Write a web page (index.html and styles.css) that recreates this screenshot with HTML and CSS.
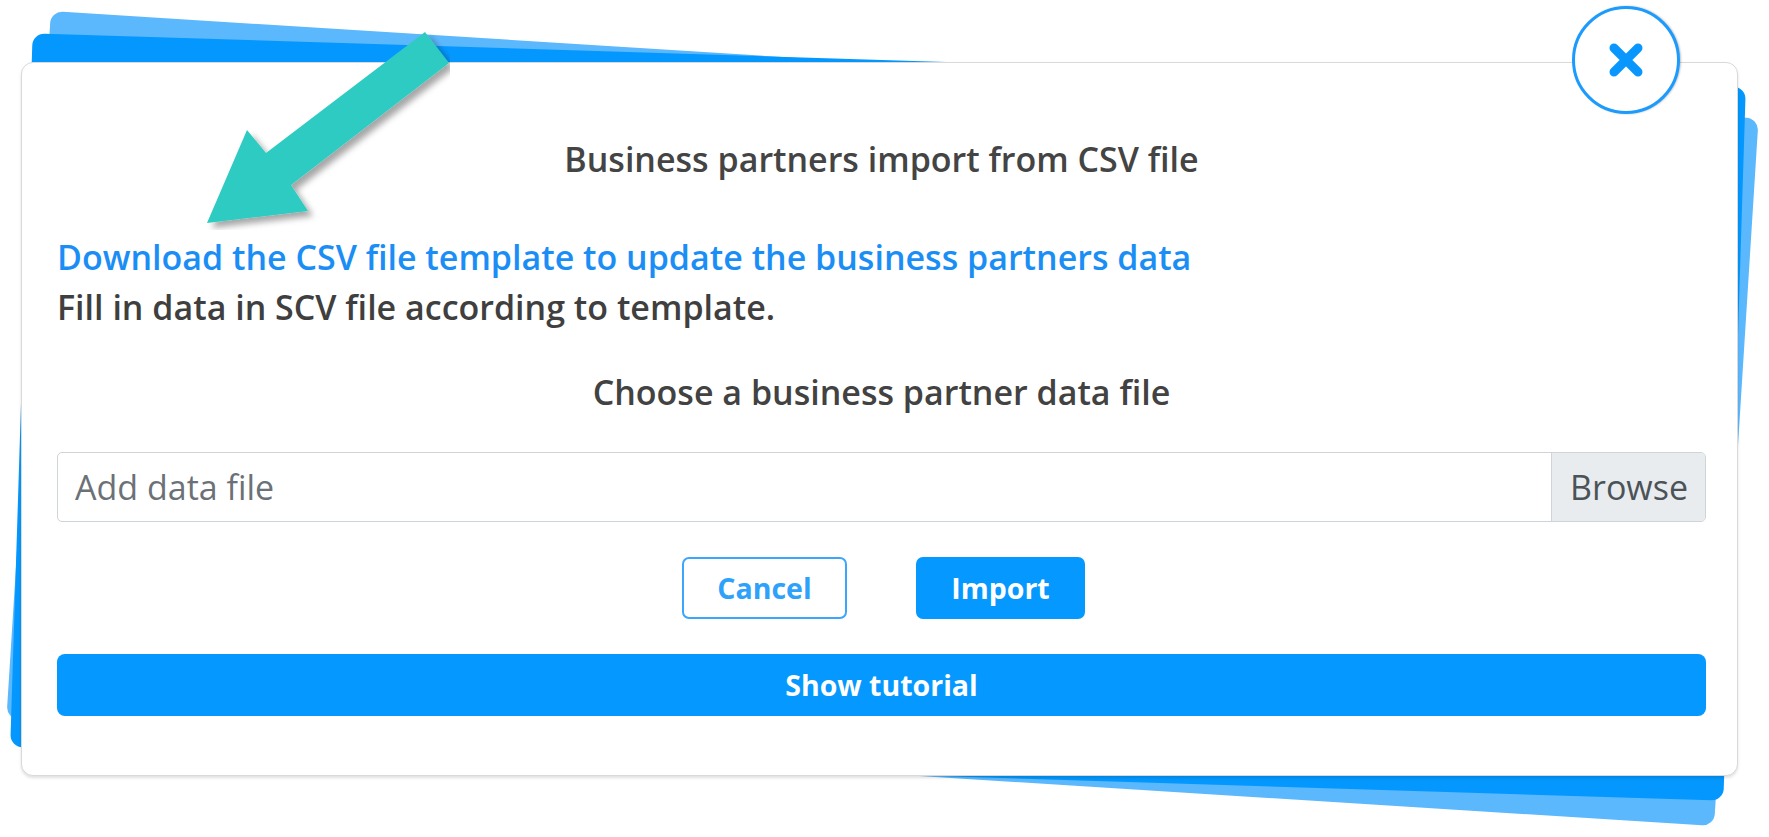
FILE: index.html
```html
<!DOCTYPE html>
<html lang="en">
<head>
<meta charset="utf-8">
<title>Business partners import</title>
<link rel="stylesheet" href="styles.css">
</head>
<body>
<div class="stage">
  <div class="layer layer-light"></div>
  <div class="layer layer-dark"></div>
  <div class="card">
    <h1 class="title">Business partners import from CSV file</h1>
    <a class="link" href="#">Download the CSV file template to update the business partners data</a>
    <p class="hint">Fill in data in SCV file according to template.</p>
    <h2 class="choose">Choose a business partner data file</h2>
    <div class="file">
      <span class="file-text">Add data file</span>
      <span class="file-btn">Browse</span>
    </div>
    <div class="actions">
      <button class="btn btn-outline">Cancel</button>
      <button class="btn btn-solid">Import</button>
    </div>
    <button class="btn btn-wide">Show tutorial</button>
    <button class="close" aria-label="Close">
      <svg width="36" height="36" viewBox="0 0 36 36"><path d="M6 6 L30 30 M30 6 L6 30" stroke="#0a97fd" stroke-width="9" stroke-linecap="round" fill="none"/></svg>
    </button>
  </div>
  <svg class="arrow" width="260" height="210" viewBox="190 20 260 210">
    <defs>
      <filter id="sh" x="-20%" y="-20%" width="140%" height="140%">
        <feDropShadow dx="5" dy="5" stdDeviation="3" flood-color="#000" flood-opacity="0.35"/>
      </filter>
    </defs>
    <polygon points="425,32 449,63 291,185 308,211 207,223 247,130 266,153" fill="#2ecbc3" filter="url(#sh)"/>
  </svg>
</div>
</body>
</html>
```
FILE: styles.css
```css
html, body {
  margin: 0;
  padding: 0;
  background: #ffffff;
}
.stage {
  position: relative;
  width: 1769px;
  height: 837px;
  overflow: hidden;
  padding-top: 62px;
  box-sizing: border-box;
  font-family: "Open Sans", "Liberation Sans", sans-serif;
}
.layer {
  position: absolute;
  border-radius: 12px;
}
.layer-light {
  left: 27px;
  top: 64px;
  width: 1711px;
  height: 709px;
  background: #5cb8fd;
  transform: rotate(3.6deg);
}
.layer-dark {
  left: 21px;
  top: 60px;
  width: 1714px;
  height: 714px;
  background: #0497fe;
  transform: rotate(1.8deg);
}
.card {
  position: relative;
  margin-left: 21px;
  width: 1717px;
  height: 714px;
  box-sizing: border-box;
  padding: 76px 31px 0 35px;
  background: #ffffff;
  border: 1px solid #d9d9d9;
  border-radius: 12px;
  box-shadow: 0 2px 3px rgba(0,0,0,0.12);
  display: flex;
  flex-direction: column;
}
.title {
  margin: 0;
  font-size: 34px;
  font-weight: 600;
  line-height: 40px;
  color: #444444;
  text-align: center;
}
.link {
  margin-top: 58px;
  font-size: 34px;
  font-weight: 600;
  line-height: 40px;
  color: #1b8ef6;
  text-decoration: none;
}
.hint {
  margin: 10px 0 0;
  font-size: 34px;
  font-weight: 600;
  line-height: 40px;
  color: #3f3f3f;
}
.choose {
  margin: 45px 0 0;
  font-size: 34px;
  font-weight: 600;
  line-height: 40px;
  color: #424242;
  text-align: center;
}
.file {
  margin-top: 40px;
  height: 70px;
  box-sizing: border-box;
  border: 1px solid #cfd4d9;
  border-radius: 5px;
  display: flex;
  overflow: hidden;
}
.file-text {
  flex: 1;
  display: flex;
  align-items: center;
  padding-left: 17px;
  font-size: 34px;
  color: #6b7176;
}
.file-btn {
  display: flex;
  align-items: center;
  padding: 0 17px 0 18px;
  background: #e9ecef;
  border-left: 1px solid #cfd4d9;
  font-size: 34px;
  color: #4c5358;
}
.actions {
  margin-top: 35px;
  display: flex;
  justify-content: center;
  gap: 69px;
  padding-left: 4px;
}
.btn {
  font-family: "Open Sans", "Liberation Sans", sans-serif;
  font-weight: 700;
  font-size: 28.5px;
  height: 62px;
  border-radius: 7px;
  box-sizing: border-box;
  cursor: pointer;
  padding: 0;
}
.btn-outline {
  width: 165px;
  background: #ffffff;
  border: 2px solid #3ba6fc;
  color: #2ea1fb;
}
.btn-solid {
  width: 169px;
  background: #0598fe;
  border: none;
  color: #ffffff;
}
.btn-wide {
  margin-top: 35px;
  width: 100%;
  background: #0598fe;
  border: none;
  color: #ffffff;
  border-radius: 8px;
}
.close {
  position: absolute;
  left: 1550px;
  top: -57px;
  width: 108px;
  height: 108px;
  border-radius: 50%;
  border: 3px solid #1a9bfd;
  background: #ffffff;
  box-shadow: 1px 0 2px rgba(0,0,0,0.25);
  display: flex;
  align-items: center;
  justify-content: center;
  padding: 0;
  cursor: pointer;
}
.arrow {
  position: absolute;
  left: 190px;
  top: 20px;
}
```
